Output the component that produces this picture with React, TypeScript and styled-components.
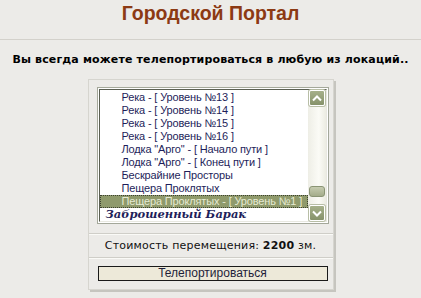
import React from 'react';
import styled, { createGlobalStyle } from 'styled-components';

const GlobalStyle = createGlobalStyle`
  html, body {
    margin: 0;
    padding: 0;
    background-color: #ecebe8;
  }
`;

const Page = styled.div`
  width: 421px;
  height: 298px;
  overflow: hidden;
  font-family: 'Liberation Sans', Arial, sans-serif;
`;

const Header = styled.div`
  height: 40px;
  box-sizing: border-box;
  padding-top: 1px;
  text-align: center;
  border-bottom: 1px solid #d3d1cb;
  font-family: 'Liberation Sans', Arial, sans-serif;
  font-size: 19.5px;
  line-height: 24px;
  font-weight: bold;
  color: #8c3a14;
`;

const Subtitle = styled.div`
  padding-top: 13px;
  text-align: center;
  font-family: 'DejaVu Sans', Verdana, sans-serif;
  font-size: 11px;
  font-weight: bold;
  color: #000;
  letter-spacing: 0.15px;
`;

const Panel = styled.div`
  width: 244px;
  margin: 13px auto 0;
  padding: 7px 0 8px;
  border: 1px solid #d6d5cf;
  box-shadow: 2px 2px 0 #c6c5bf;
  display: flex;
  flex-direction: column;
`;

const ListBox = styled.div`
  margin: 0 4px 0 8px;
  border: 1px solid #a4a89a;
  padding: 1px;
  background: #fff;
  display: flex;
`;

const ListInner = styled.div`
  flex: 1;
  border: 1px solid #5a5f52;
  border-right-color: #e8e8e0;
  border-bottom-color: #e8e8e0;
  display: flex;
  background: #fff;
`;

const Options = styled.div`
  flex: 1;
  padding-top: 1px;
  display: flex;
  flex-direction: column;
  font-family: 'Liberation Sans', Tahoma, sans-serif;
  font-size: 11px;
  letter-spacing: -0.15px;
`;

const Option = styled.div<{ $selected?: boolean }>`
  height: 13px;
  line-height: 13px;
  padding-left: 22px;
  white-space: nowrap;
  overflow: hidden;
  color: ${({ $selected }) => ($selected ? '#e6ead2' : '#1e1e5a')};
  background: ${({ $selected }) => ($selected ? '#8f9a6c' : 'transparent')};
  outline: ${({ $selected }) => ($selected ? '1px dotted #3c4030' : 'none')};
  outline-offset: -1px;
`;

const GroupLabel = styled.div`
  height: 13px;
  line-height: 13px;
  padding-left: 6px;
  font-family: 'DejaVu Serif', serif;
  font-size: 11.5px;
  font-weight: bold;
  font-style: italic;
  letter-spacing: 0;
  color: #1e1e5a;
  white-space: nowrap;
`;

const Scrollbar = styled.div`
  width: 18px;
  display: flex;
  flex-direction: column;
  background: linear-gradient(to right, #eeeee6, #fbfbf6 60%, #ecece2);
`;

const ScrollButton = styled.div`
  width: 16px;
  height: 16px;
  margin: 0 1px;
  border: 1px solid #fff;
  border-radius: 2px;
  box-sizing: border-box;
  background: linear-gradient(#a6b08a, #86926a);
  box-shadow: 0 0 0 1px #b8bea6;
  display: flex;
  align-items: center;
  justify-content: center;
`;

const Track = styled.div`
  flex: 1;
  display: flex;
  flex-direction: column;
  justify-content: flex-end;
  padding-bottom: 8px;
`;

const Thumb = styled.div`
  height: 9px;
  margin: 0 1px;
  border-radius: 3px;
  border: 1px solid #8a9474;
  background: linear-gradient(#c6ccb0, #a4ac8a);
`;

const Separator = styled.div<{ $gap?: number }>`
  margin-top: ${({ $gap }) => $gap ?? 0}px;
  border-top: 1px solid #cfcec8;
  border-bottom: 1px solid #fafaf7;
`;

const Cost = styled.div`
  height: 22px;
  line-height: 22px;
  text-align: center;
  font-family: 'DejaVu Sans', Verdana, sans-serif;
  font-size: 11px;
  letter-spacing: 0.2px;
  color: #111;

  b {
    font-weight: bold;
  }
`;

const TeleportButton = styled.button`
  margin: 7px 5px 0 9px;
  height: 15px;
  padding: 0;
  border: 1px solid #1a1a1a;
  background: #ede9d9;
  font-family: 'Liberation Sans', Tahoma, sans-serif;
  font-size: 12px;
  line-height: 13px;
  color: #1e1e3a;
  cursor: pointer;
`;

const Chevron = ({ up }: { up?: boolean }) => (
  <svg width="10" height="7" viewBox="0 0 10 7">
    <path
      d={up ? 'M1 5.5 L5 1.5 L9 5.5' : 'M1 1.5 L5 5.5 L9 1.5'}
      fill="none"
      stroke="#fff"
      strokeWidth="2"
    />
  </svg>
);

const items = [
  'Река - [ Уровень №13 ]',
  'Река - [ Уровень №14 ]',
  'Река - [ Уровень №15 ]',
  'Река - [ Уровень №16 ]',
  'Лодка "Арго" - [ Начало пути ]',
  'Лодка "Арго" - [ Конец пути ]',
  'Бескрайние Просторы',
  'Пещера Проклятых',
  'Пещера Проклятых - [ Уровень №1 ]',
];

const App: React.FC = () => {
  return (
    <Page>
      <GlobalStyle />
      <Header>Городской Портал</Header>
      <Subtitle>Вы всегда можете телепортироваться в любую из локаций..</Subtitle>
      <Panel>
        <ListBox>
          <ListInner>
            <Options>
              {items.map((item, i) => (
                <Option key={item} $selected={i === items.length - 1}>
                  {item}
                </Option>
              ))}
              <GroupLabel>Заброшенный Барак</GroupLabel>
            </Options>
            <Scrollbar>
              <ScrollButton>
                <Chevron up />
              </ScrollButton>
              <Track>
                <Thumb />
              </Track>
              <ScrollButton>
                <Chevron />
              </ScrollButton>
            </Scrollbar>
          </ListInner>
        </ListBox>
        <Separator $gap={9} />
        <Cost>
          Стоимость перемещения: <b>2200</b> зм.
        </Cost>
        <Separator />
        <TeleportButton>Телепортироваться</TeleportButton>
      </Panel>
    </Page>
  );
};

export default App;
